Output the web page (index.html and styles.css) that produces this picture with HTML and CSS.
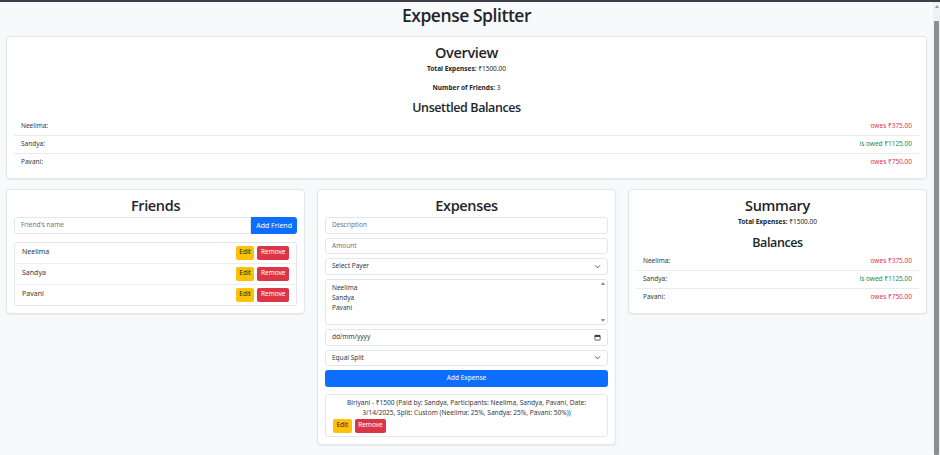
FILE: index.html
```html
<!DOCTYPE html>
<html lang="en">
<head>
<meta charset="utf-8">
<title>Expense Splitter</title>
<link rel="stylesheet" href="styles.css">
</head>
<body>
<div class="topline"></div>
<div class="page">
  <main class="app">
    <h1 class="title">Expense Splitter</h1>

    <section class="card overview">
      <h2 class="card-title">Overview</h2>
      <p class="stat"><strong>Total Expenses:</strong> ₹1500.00</p>
      <p class="stat stat-last"><strong>Number of Friends:</strong> 3</p>
      <h3 class="sub-title">Unsettled Balances</h3>
      <ul class="balances">
        <li class="bal-row"><span>Neelima:</span><span class="owes">owes ₹375.00</span></li>
        <li class="bal-row"><span>Sandya:</span><span class="owed">is owed ₹1125.00</span></li>
        <li class="bal-row"><span>Pavani:</span><span class="owes">owes ₹750.00</span></li>
      </ul>
    </section>

    <div class="columns">
      <section class="card friends">
        <h2 class="card-title">Friends</h2>
        <div class="input-group">
          <div class="field field-grow placeholder">Friend's name</div>
          <button class="btn btn-primary btn-addon">Add Friend</button>
        </div>
        <ul class="list-box">
          <li class="friend-row"><span>Neelima</span><span class="actions"><button class="btn btn-warning">Edit</button><button class="btn btn-danger">Remove</button></span></li>
          <li class="friend-row"><span>Sandya</span><span class="actions"><button class="btn btn-warning">Edit</button><button class="btn btn-danger">Remove</button></span></li>
          <li class="friend-row"><span>Pavani</span><span class="actions"><button class="btn btn-warning">Edit</button><button class="btn btn-danger">Remove</button></span></li>
        </ul>
      </section>

      <section class="card expenses">
        <h2 class="card-title">Expenses</h2>
        <div class="form-stack">
          <div class="field placeholder">Description</div>
          <div class="field placeholder">Amount</div>
          <div class="field select">
            <span>Select Payer</span>
            <svg class="chev" viewBox="0 0 16 16"><path d="M3 6l5 5 5-5" fill="none" stroke="#343a40" stroke-width="2" stroke-linecap="round" stroke-linejoin="round"/></svg>
          </div>
          <div class="field multi">
            <div class="multi-options">
              <span>Neelima</span>
              <span>Sandya</span>
              <span>Pavani</span>
            </div>
            <div class="mini-scroll">
              <span class="tri tri-up"></span>
              <span class="tri tri-down"></span>
            </div>
          </div>
          <div class="field select date">
            <span class="placeholder-dark">dd/mm/yyyy</span>
            <svg class="cal" viewBox="0 0 16 16"><rect x="2" y="3" width="12" height="11" rx="1.5" fill="none" stroke="#222" stroke-width="1.6"/><rect x="2" y="3" width="12" height="3.5" fill="#222"/></svg>
          </div>
          <div class="field select">
            <span>Equal Split</span>
            <svg class="chev" viewBox="0 0 16 16"><path d="M3 6l5 5 5-5" fill="none" stroke="#343a40" stroke-width="2" stroke-linecap="round" stroke-linejoin="round"/></svg>
          </div>
          <button class="btn btn-primary btn-block">Add Expense</button>
        </div>
        <div class="expense-item">
          <p class="expense-text">Biriyani - ₹1500 (Paid by: Sandya, Participants: Neelima, Sandya, Pavani, Date: 3/14/2025, Split: Custom (Neelima: 25%, Sandya: 25%, Pavani: 50%))</p>
          <div class="actions">
            <button class="btn btn-warning">Edit</button><button class="btn btn-danger">Remove</button>
          </div>
        </div>
      </section>

      <section class="card summary">
        <h2 class="card-title">Summary</h2>
        <p class="stat stat-sum"><strong>Total Expenses:</strong> ₹1500.00</p>
        <h3 class="sub-title">Balances</h3>
        <ul class="balances">
          <li class="bal-row"><span>Neelima:</span><span class="owes">owes ₹375.00</span></li>
          <li class="bal-row"><span>Sandya:</span><span class="owed">is owed ₹1125.00</span></li>
          <li class="bal-row"><span>Pavani:</span><span class="owes">owes ₹750.00</span></li>
        </ul>
      </section>
    </div>
  </main>
  <div class="scrollbar">
    <span class="sb-arrow"></span>
    <div class="sb-thumb"></div>
  </div>
</div>
</body>
</html>
```

FILE: styles.css
```css
* { box-sizing: border-box; }

html, body {
  margin: 0;
  padding: 0;
  height: 100%;
}

body {
  background: #f8f9fa;
  color: #212529;
  font-family: "Noto Sans", "Open Sans", "DejaVu Sans", sans-serif;
  font-size: 6.5px;
  line-height: 1.5;
  overflow: hidden;
}

.topline {
  height: 2px;
  background: #3d3d47;
}

.page {
  display: flex;
  height: 453px;
}

.app {
  flex: 1;
  padding: 0 6px;
}

.title,
.card-title,
.sub-title {
  font-family: "Open Sans", "Noto Sans", sans-serif;
  font-weight: 600;
  text-align: center;
  color: #212529;
}

.title {
  margin: 2px 0 10px;
  font-size: 17.5px;
  line-height: 22px;
  letter-spacing: -0.45px;
}

.card {
  background: #fff;
  border: 1px solid #e3e5e8;
  border-radius: 4px;
  box-shadow: 0 1px 2px rgba(0, 0, 0, 0.06);
  padding: 6px 7px 7px;
}

.card-title {
  margin: 0;
  font-size: 14.5px;
  line-height: 19px;
  letter-spacing: -0.35px;
}

.sub-title {
  margin: 0 0 2px;
  font-size: 12.5px;
  line-height: 17px;
  letter-spacing: -0.4px;
}

.stat {
  margin: 2px 0 8px;
  text-align: center;
  font-size: 6.5px;
  line-height: 10.5px;
}

.stat strong { font-weight: 700; }

.stat-last { margin-bottom: 5.5px; }
.stat-sum { margin-bottom: 6.5px; }

.balances {
  list-style: none;
  margin: 0;
  padding: 0;
}

.bal-row {
  display: flex;
  justify-content: space-between;
  padding: 3.25px 7px;
  line-height: 10.5px;
  font-size: 6.5px;
  color: #343a40;
  border-bottom: 1px solid #e9ecef;
}

.bal-row:last-child { border-bottom: none; }

.owes { color: #dc3545; }
.owed { color: #198754; }

.columns {
  display: grid;
  grid-template-columns: repeat(3, 1fr);
  gap: 12px;
  align-items: start;
  margin-top: 10.5px;
}

/* Inputs */
.form-stack {
  margin-top: 2px;
}

.field {
  height: 16.5px;
  border: 1px solid #e4e7ea;
  border-radius: 3px;
  background: #fff;
  padding: 0 6px;
  display: flex;
  align-items: center;
  font-size: 6.5px;
  color: #343a40;
  margin-bottom: 4px;
}

.placeholder { color: #6c757d; }
.placeholder-dark { color: #343a40; }

.select { justify-content: space-between; }

.chev { width: 7px; height: 7px; }
.cal { width: 7px; height: 7px; }

.input-group {
  display: flex;
  margin-top: 2px;
}

.field-grow {
  flex: 1;
  margin-bottom: 0;
  border-radius: 3px 0 0 3px;
}

.btn {
  font-family: inherit;
  border: 1px solid transparent;
  border-radius: 2px;
  font-size: 6.5px;
  line-height: 1;
  cursor: pointer;
  padding: 0 2.5px;
  height: 14px;
}

.btn-primary { background: #0d6efd; color: #fff; }
.btn-warning { background: #ffc107; color: #212529; }
.btn-danger { background: #dc3545; color: #fff; }

.btn-addon {
  height: 16.5px;
  border-radius: 0 3px 3px 0;
  padding: 0 4px;
  font-size: 7px;
}

.btn-block {
  display: block;
  width: 100%;
  height: 17px;
  border-radius: 3px;
}

.list-box {
  list-style: none;
  margin: 8px 0 0;
  padding: 0;
  border: 1px solid #e4e7ea;
  border-radius: 3px;
}

.friend-row {
  display: flex;
  justify-content: space-between;
  align-items: center;
  padding: 3px 7px;
  font-size: 7px;
  color: #343a40;
  border-bottom: 1px solid #eceef0;
}

.friend-row:last-child { border-bottom: none; }

.actions {
  display: flex;
  gap: 3px;
}

/* Multi select */
.multi {
  height: 46.5px;
  align-items: stretch;
  padding: 0 0 0 6px;
  margin-bottom: 4px;
}

.multi-options {
  flex: 1;
  display: flex;
  flex-direction: column;
  padding-top: 3.5px;
  line-height: 10px;
}

.mini-scroll {
  width: 8px;
  display: flex;
  flex-direction: column;
  justify-content: space-between;
  align-items: center;
  padding: 2px 0;
}

.tri {
  width: 0;
  height: 0;
  border-left: 2.5px solid transparent;
  border-right: 2.5px solid transparent;
}

.tri-up { border-bottom: 3px solid #8a8a8a; }
.tri-down { border-top: 3px solid #8a8a8a; }

/* Expense item */
.expense-item {
  margin-top: 6.5px;
  border: 1px solid #e4e7ea;
  border-radius: 3px;
  padding: 3px 7px 3.5px;
}

.expense-text {
  margin: 0 0 1px;
  text-align: center;
  font-size: 6.6px;
  line-height: 10px;
  color: #343a40;
}

/* Fake browser scrollbar */
.scrollbar {
  width: 7px;
  background: #f1f1f1;
  display: flex;
  flex-direction: column;
  align-items: center;
}

.sb-arrow {
  margin-top: 3px;
  width: 0;
  height: 0;
  border-left: 2.5px solid transparent;
  border-right: 2.5px solid transparent;
  border-bottom: 3px solid #9a9a9a;
}

.sb-thumb {
  margin-top: 13px;
  flex: 1;
  width: 5px;
  background: #8e8e8e;
  border-radius: 1px;
}
```
